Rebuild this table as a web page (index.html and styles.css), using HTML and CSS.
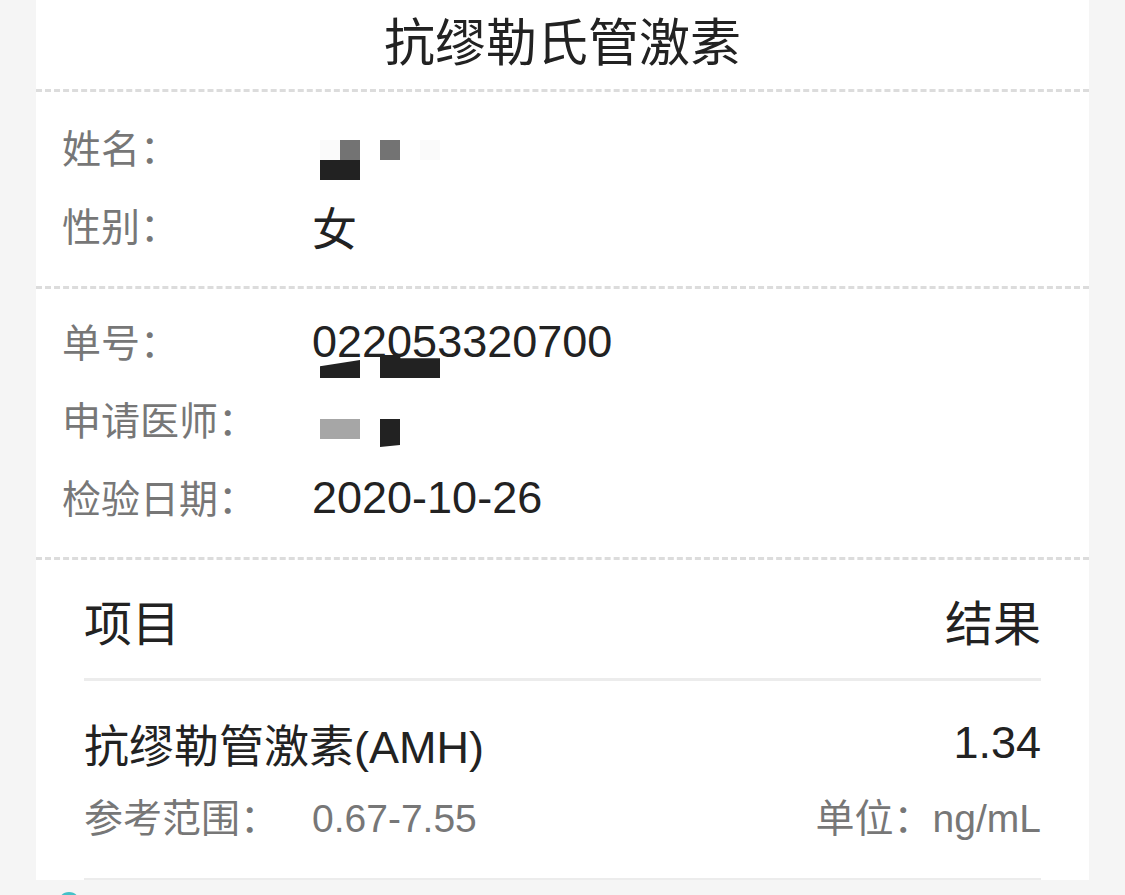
FILE: index.html
```html
<!DOCTYPE html>
<html lang="zh-CN">
<head>
    <meta charset="UTF-8">
    <meta name="viewport" content="width=device-width, initial-scale=1.0">
    <title>检验报告</title>
    <link rel="stylesheet" href="styles.css">
</head>
<body>
    <div class="card">
        <h1 class="title">抗缪勒氏管激素</h1>

        <section class="info info-first">
            <div class="row">
                <span class="label">姓名：</span>
                <span class="mosaic">
                    <i class="px-faint"></i><i class="px-mid"></i><i></i><i class="px-mid"></i><i></i><i class="px-faint"></i>
                    <i class="px-dark"></i><i class="px-dark"></i><i></i><i></i><i></i><i></i>
                </span>
            </div>
            <div class="row">
                <span class="label">性别：</span>
                <span class="value">女</span>
            </div>
        </section>

        <section class="info info-second">
            <div class="row">
                <span class="label">单号：</span>
                <span class="value">022053320700</span>
                <span class="blot blot-order-a"></span>
                <span class="blot blot-order-b"></span>
            </div>
            <div class="row">
                <span class="label">申请医师：</span>
                <span class="blot blot-doc-a"></span>
                <span class="blot blot-doc-b"></span>
            </div>
            <div class="row">
                <span class="label">检验日期：</span>
                <span class="value">2020-10-26</span>
            </div>
        </section>

        <div class="results">
            <div class="results-head">
                <span>项目</span>
                <span>结果</span>
            </div>
            <div class="result-item">
                <div class="item-line">
                    <span>抗缪勒管激素(AMH)</span>
                    <span>1.34</span>
                </div>
                <div class="ref-line">
                    <span><span class="ref-label">参考范围：</span>0.67-7.55</span>
                    <span>单位：ng/mL</span>
                </div>
            </div>
        </div>
    </div>
    <div class="next-card"><span class="dot"></span></div>
</body>
</html>
```

FILE: styles.css
```css
:root {
    --text-dark: #222;
    --text-grey: #777;
    --dash: #dcdcdc;
    --line: #ececec;
    --page-bg: #f5f5f5;
}

body {
    margin: 0;
    background: var(--page-bg);
    color: var(--text-dark);
    font-family: "Liberation Sans", "Noto Sans CJK SC", sans-serif;
}

.card {
    margin: 0 36px;
    background: #fff;
}

.title {
    margin: 0;
    height: 89px;
    line-height: 87px;
    text-align: center;
    font-size: 51px;
    font-weight: normal;
    border-bottom: 3px dashed var(--dash);
}

.info {
    padding-left: 26px;
    border-bottom: 3px dashed var(--dash);
}

.info-first {
    padding-top: 17px;
    padding-bottom: 21px;
}

.info-second {
    padding-top: 14px;
    padding-bottom: 20px;
}

.row {
    position: relative;
    display: flex;
    align-items: center;
    height: 78px;
}

.label {
    flex: none;
    width: 250px;
    padding-bottom: 4px;
    font-size: 39px;
    color: var(--text-grey);
}

.value {
    font-size: 45px;
}

/* pixelated name */
.mosaic {
    align-self: flex-start;
    margin: 31px 0 0 8px;
    display: grid;
    grid-template-columns: repeat(6, 20px);
    grid-auto-rows: 20px;
}

.mosaic i {
    background: #fff;
}

.mosaic .px-faint { background: #fafafa; }
.mosaic .px-mid { background: #737373; }
.mosaic .px-dark { background: #222; }

/* redaction blots over text */
.blot {
    position: absolute;
    background: #222;
}

.blot-order-a {
    left: 258px;
    top: 57px;
    width: 40px;
    height: 18px;
    clip-path: polygon(0 35%, 100% 0, 100% 100%, 0 100%);
}

.blot-order-b {
    left: 318px;
    top: 52px;
    width: 60px;
    height: 23px;
    clip-path: polygon(0 0, 34% 0, 34% 14%, 100% 14%, 100% 100%, 0 100%);
}

.blot-doc-a {
    left: 258px;
    top: 38px;
    width: 40px;
    height: 20px;
    background: #a6a6a6;
}

.blot-doc-b {
    left: 318px;
    top: 38px;
    width: 20px;
    height: 28px;
    clip-path: polygon(0 0, 100% 0, 100% 93%, 0 100%);
}

.results {
    padding: 0 48px;
}

.results-head {
    display: flex;
    justify-content: space-between;
    padding-top: 11px;
    height: 107px;
    line-height: 107px;
    font-size: 48px;
    border-bottom: 3px solid var(--line);
}

.result-item {
    padding: 20px 0 33px;
    border-bottom: 2px solid var(--line);
}

.item-line {
    display: flex;
    justify-content: space-between;
    align-items: center;
    height: 84px;
    font-size: 45px;
}

.ref-line {
    display: flex;
    justify-content: space-between;
    align-items: center;
    height: 60px;
    font-size: 39px;
    color: var(--text-grey);
}

.ref-label {
    display: inline-block;
    width: 228px;
}

.next-card {
    margin: 12px 36px 0;
    padding-left: 22px;
}

.dot {
    display: block;
    width: 22px;
    height: 22px;
    border-radius: 50%;
    border: 3px solid #45c1c8;
    box-sizing: border-box;
}
```
